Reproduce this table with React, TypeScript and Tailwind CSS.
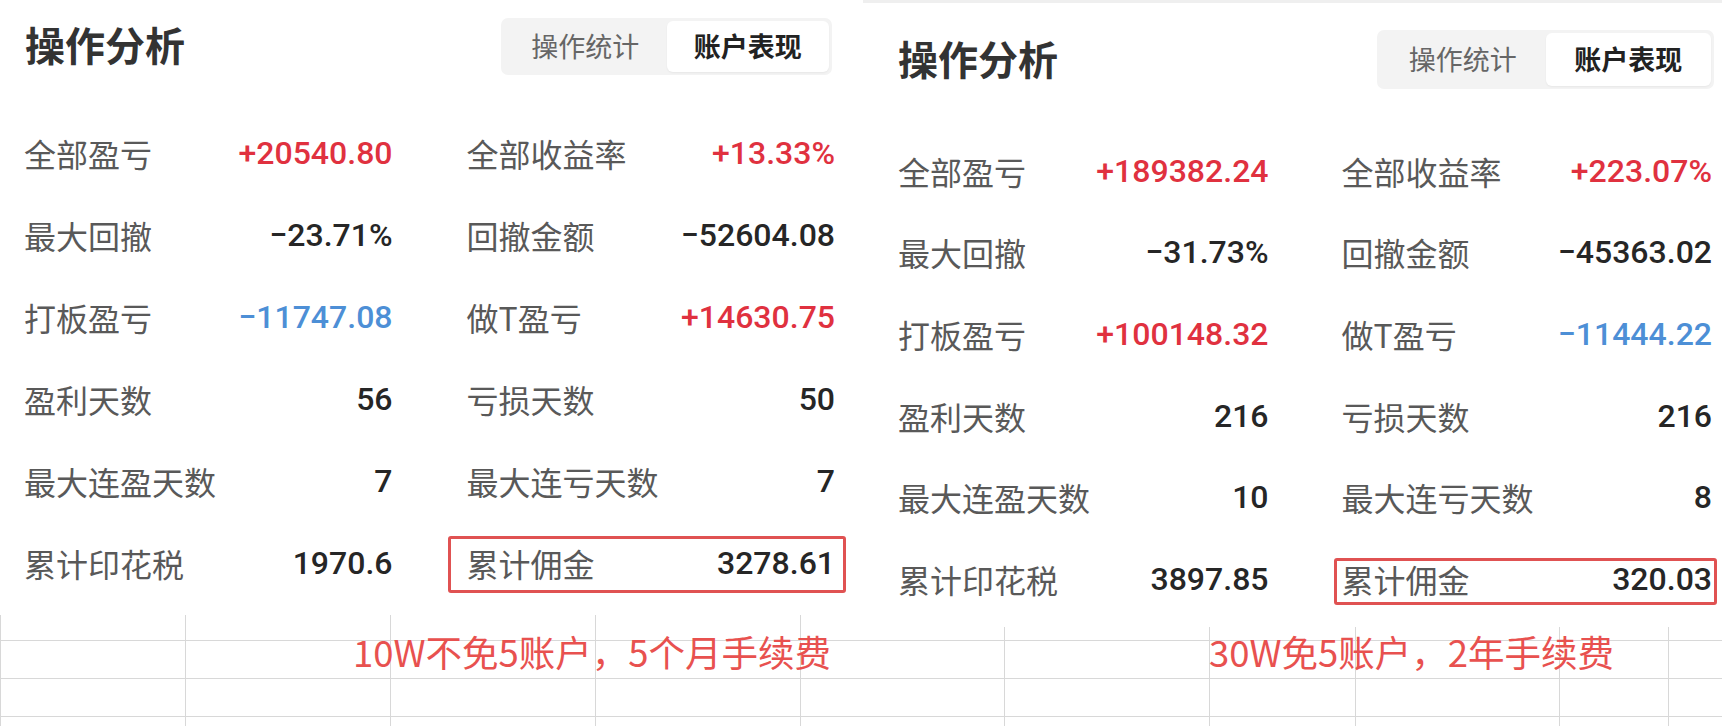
import React from 'react';
import { clsx } from 'clsx';

type Tone = 'red' | 'blue' | 'plain';

interface Stat {
  label: string;
  value: string;
  tone?: Tone;
}

const leftStats: Stat[] = [
  { label: '全部盈亏', value: '+20540.80', tone: 'red' },
  { label: '全部收益率', value: '+13.33%', tone: 'red' },
  { label: '最大回撤', value: '−23.71%' },
  { label: '回撤金额', value: '−52604.08' },
  { label: '打板盈亏', value: '−11747.08', tone: 'blue' },
  { label: '做T盈亏', value: '+14630.75', tone: 'red' },
  { label: '盈利天数', value: '56' },
  { label: '亏损天数', value: '50' },
  { label: '最大连盈天数', value: '7' },
  { label: '最大连亏天数', value: '7' },
  { label: '累计印花税', value: '1970.6' },
  { label: '累计佣金', value: '3278.61' },
];

const rightStats: Stat[] = [
  { label: '全部盈亏', value: '+189382.24', tone: 'red' },
  { label: '全部收益率', value: '+223.07%', tone: 'red' },
  { label: '最大回撤', value: '−31.73%' },
  { label: '回撤金额', value: '−45363.02' },
  { label: '打板盈亏', value: '+100148.32', tone: 'red' },
  { label: '做T盈亏', value: '−11444.22', tone: 'blue' },
  { label: '盈利天数', value: '216' },
  { label: '亏损天数', value: '216' },
  { label: '最大连盈天数', value: '10' },
  { label: '最大连亏天数', value: '8' },
  { label: '累计印花税', value: '3897.85' },
  { label: '累计佣金', value: '320.03' },
];

const StatCell: React.FC<Stat> = ({ label, value, tone = 'plain' }) => (
  <div className="flex items-center justify-between">
    <span className="text-[32px] leading-none text-[#595959]">{label}</span>
    <span
      className={clsx(
        "font-['Roboto','Noto_Sans_CJK_SC',sans-serif] text-[32px] font-medium leading-none",
        tone === 'red' && 'text-[#e0313f]',
        tone === 'blue' && 'text-[#4d8fd6]',
        tone === 'plain' && 'text-[#262626]'
      )}
    >
      {value}
    </span>
  </div>
);

const Tabs: React.FC<{ className?: string }> = ({ className }) => (
  <div className={clsx('flex rounded-[7px] bg-[#f3f3f3] p-[3px]', className)}>
    <div className="flex flex-1 items-center justify-center text-[27px] text-[#666]">操作统计</div>
    <div className="flex flex-1 items-center justify-center rounded-[6px] bg-white text-[27px] font-bold text-[#222] shadow-[0_1px_2px_rgba(0,0,0,0.05)]">
      账户表现
    </div>
  </div>
);

// spreadsheet grid peeking out under the screenshots
const Sheet: React.FC<{ cols: number; rows: number; className: string; children?: React.ReactNode }> = ({
  cols,
  rows,
  className,
  children,
}) => (
  <div className={clsx('relative grid flex-1', className)}>
    {Array.from({ length: cols * rows }).map((_, i) => {
      const c = i % cols;
      const r = Math.floor(i / cols);
      return (
        <div
          key={i}
          className={clsx(
            'border-[#d8d8d8]',
            c < cols - 1 && 'border-r',
            r < rows - 1 && 'border-b'
          )}
        />
      );
    })}
    {children}
  </div>
);

export default function App() {
  return (
    <div className="flex h-[726px] w-[1722px] overflow-hidden bg-white font-['Noto_Sans_CJK_SC',sans-serif]">
      {/* left screenshot */}
      <div className="flex w-[863px] flex-col">
        <div className="relative h-[615px] pl-[24px] pr-[28px]">
          <div className="flex items-center justify-between pt-[18px]">
            <h1 className="-mt-[5px] pl-px text-[40px] font-bold leading-none text-[#333]">操作分析</h1>
            <Tabs className="mr-[3px] h-[57px] w-[331px]" />
          </div>
          <div className="mt-[37px] grid grid-cols-2 auto-rows-[82px] gap-x-[74px]">
            {leftStats.map((s) => (
              <StatCell key={s.label} {...s} />
            ))}
          </div>
          <div className="absolute left-[448px] top-[536px] h-[57px] w-[398px] rounded-[3px] border-[3px] border-[#e05252]" />
        </div>
        <Sheet cols={5} rows={4} className="grid-cols-[185px_205px_205px_205px_1fr] grid-rows-[26px_38px_38px_1fr] border-l border-[#d8d8d8]">
          <div className="absolute left-[352px] top-[19px] whitespace-nowrap text-[36.5px] leading-none text-[#e8514f]">
            10W不免5账户，5个月手续费
          </div>
        </Sheet>
      </div>

      {/* right screenshot */}
      <div className="flex flex-1 flex-col">
        <div className="relative h-[627px]">
          <div className="h-[3px] bg-[#efefef]" />
          <div className="pl-[35px] pr-[10px]">
            <div className="flex items-center justify-between pt-[27px]">
              <h1 className="-mt-[3px] text-[40px] font-bold leading-none text-[#333]">操作分析</h1>
              <Tabs className="mr-[-2px] h-[59px] w-[337px]" />
            </div>
            <div className="mt-[41px] grid grid-cols-2 auto-rows-[81.6px] gap-x-[73px]">
              {rightStats.map((s) => (
                <StatCell key={s.label} {...s} />
              ))}
            </div>
          </div>
          <div className="absolute left-[471px] top-[558px] h-[47px] w-[383px] rounded-[3px] border-[3px] border-[#e05252]" />
        </div>
        <Sheet cols={6} rows={4} className="grid-cols-[142px_205px_146px_204px_109px_1fr] grid-rows-[14px_38px_38px_1fr]">
          <div className="absolute left-[346px] top-[7px] whitespace-nowrap text-[36.5px] leading-none text-[#e8514f]">
            30W免5账户，2年手续费
          </div>
        </Sheet>
      </div>
    </div>
  );
}
